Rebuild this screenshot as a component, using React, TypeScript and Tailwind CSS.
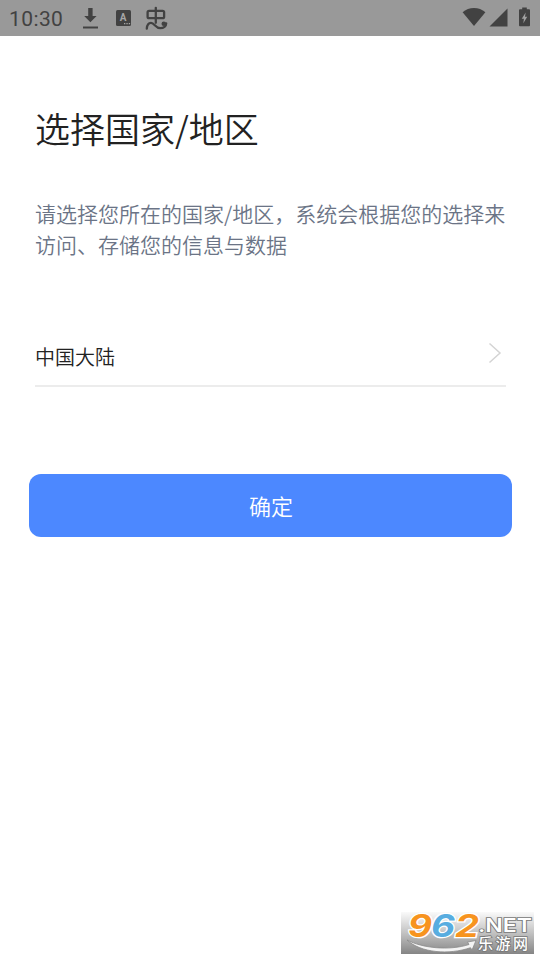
function StatusBar() {
  return (
    <header className="flex h-9 items-center bg-[#999999] pl-[9px] pr-[10px] text-[#424242]">
      <span className="w-[73px] pt-px font-[Roboto] text-[21px] leading-9 tracking-[0.4px]">
        10:30
      </span>
      <svg width="17" height="22" viewBox="0 0 17 22" fill="currentColor">
        <path d="M6.200 1h4.400v8h4L8.400 15.300 2.200 9h4z" />
        <path d="M1 19.500h15v2H1z" />
      </svg>
      <svg className="ml-[17px]" width="15" height="16" viewBox="0 0 15 16">
        <rect width="15" height="16" rx="1.5" fill="currentColor" />
        <text
          x="7.2"
          y="11"
          textAnchor="middle"
          fontFamily="Roboto"
          fontSize="10"
          fontWeight="700"
          fill="#a6a6a6"
        >
          A
        </text>
        <path d="M8 13h1.300v1.200H8zM10.400 13h1.300v1.200h-1.300zM12.800 13h1.300v1.200h-1.300z" fill="#a6a6a6" />
      </svg>
      <svg
        className="ml-[14px]"
        width="23"
        height="24"
        viewBox="0 0 23 24"
        fill="none"
        stroke="currentColor"
        strokeWidth="2.3"
        strokeLinecap="round"
      >
        <rect x="2.600" y="4.800" width="16.500" height="7.400" rx="1.500" />
        <path d="M10.800 1.800v15" />
        <path d="M1.800 22.600c.3-3.400 2-5.700 4.200-5.700 3.600 0 4.300 5.300 9.300 5.300 3.400 0 5.900-1.900 5.900-4.900" />
        <circle cx="18.800" cy="17.700" r="2.300" fill="currentColor" stroke="none" />
      </svg>

      <svg className="mb-[2px] ml-auto" width="24" height="20" viewBox="0 0 24 20" fill="currentColor">
        <path d="M.6 5.300C6.800-.4 17.200-.4 23.400 5.300L12 19z" />
      </svg>
      <svg className="mb-px ml-[3px]" width="19" height="19" viewBox="0 0 19 19" fill="currentColor">
        <path d="M18.500.5v18H.5z" />
      </svg>
      <svg className="mb-[2px] ml-[11px]" width="11" height="20" viewBox="0 0 12 21">
        <path
          d="M3.500 0h5v2H11a1 1 0 0 1 1 1v16.500a1 1 0 0 1-1 1H1a1 1 0 0 1-1-1V3a1 1 0 0 1 1-1h2.500z"
          fill="currentColor"
        />
        <path d="M7.300 5.500 3 12.300h2.400l-.7 5L9 10.300H6.500z" fill="#a0a0a0" />
      </svg>
    </header>
  );
}

function Watermark() {
  return (
    <svg width="133" height="42" viewBox="0 0 133 42" className="block overflow-visible">
      <defs>
        <linearGradient id="plate" x1="0" y1="0" x2="0" y2="1">
          <stop offset="0" stopColor="#fafafa" />
          <stop offset="0.5" stopColor="#c2c2c2" />
          <stop offset="1" stopColor="#858585" />
        </linearGradient>
      </defs>
      <rect width="133" height="42" fill="url(#plate)" />
      <path
        d="M6 28c15 8 42 11 62 4.500l-1.500-2.500 8.500-1.500-4 9.500-1.500-2.300C48 43 20 41 6 28z"
        fill="#f4f4f4"
        stroke="#8a8a8a"
        strokeWidth="0.800"
      />
      <g
        fontFamily="Inter, Roboto, sans-serif"
        fontSize="31"
        fontWeight="700"
        fontStyle="italic"
        stroke="#ffffff"
        strokeWidth="2.500"
        paintOrder="stroke"
      >
        <text x="7" y="25" textLength="24" lengthAdjust="spacingAndGlyphs" fill="#f7941f">9</text>
        <text x="30" y="25" textLength="24" lengthAdjust="spacingAndGlyphs" fill="#58ade0">6</text>
        <text x="54" y="25" textLength="24" lengthAdjust="spacingAndGlyphs" fill="#f7941f">2</text>
      </g>
      <g fill="#ffffff" stroke="#777777" strokeWidth="1.600" paintOrder="stroke">
        <text
          x="77"
          y="19.500"
          fontFamily="Inter, sans-serif"
          fontSize="18"
          fontWeight="600"
          textLength="54"
          lengthAdjust="spacingAndGlyphs"
        >
          .NET
        </text>
        <text
          x="77"
          y="37"
          fontFamily="'Noto Sans CJK SC', sans-serif"
          fontSize="15"
          fontWeight="500"
          textLength="50"
        >
          乐游网
        </text>
      </g>
    </svg>
  );
}

export default function App() {
  return (
    <div className="flex h-[960px] w-[540px] flex-col overflow-hidden bg-white font-['Noto_Sans_CJK_SC',sans-serif]">
      <StatusBar />

      <main className="flex flex-1 flex-col">
        <section className="px-[35px] pt-[66px]">
          <h1 className="text-[35px] font-[350] leading-[52px] text-[#222222]">选择国家/地区</h1>
          <p className="mt-11 whitespace-nowrap text-[21px] font-[350] leading-[31px] text-[#6b7486]">
            请选择您所在的国家/地区，系统会根据您的选择来
            <br />
            访问、存储您的信息与数据
          </p>
        </section>

        <button className="ml-[35px] mr-[34px] mt-[69px] flex h-[58px] justify-between border-b-2 border-[#ececec] text-left">
          <span className="pt-[13px] text-[20px] font-[350] leading-[30px] text-[#222222]">中国大陆</span>
          <svg
            className="mr-[4px] mt-[13px]"
            width="14"
            height="22"
            viewBox="0 0 14 22"
            fill="none"
            stroke="#d4d4d4"
            strokeWidth="1.500"
          >
            <path d="M1.500 1.500 12 11 1.500 20.500" />
          </svg>
        </button>

        <button className="ml-[29px] mr-[28px] mt-[87px] h-[63px] rounded-xl bg-[#4c88ff] pl-px text-[22px] font-[350] leading-[63px] text-white">
          确定
        </button>
      </main>

      <footer className="mb-[6px] mr-[6px] self-end">
        <Watermark />
      </footer>
    </div>
  );
}
